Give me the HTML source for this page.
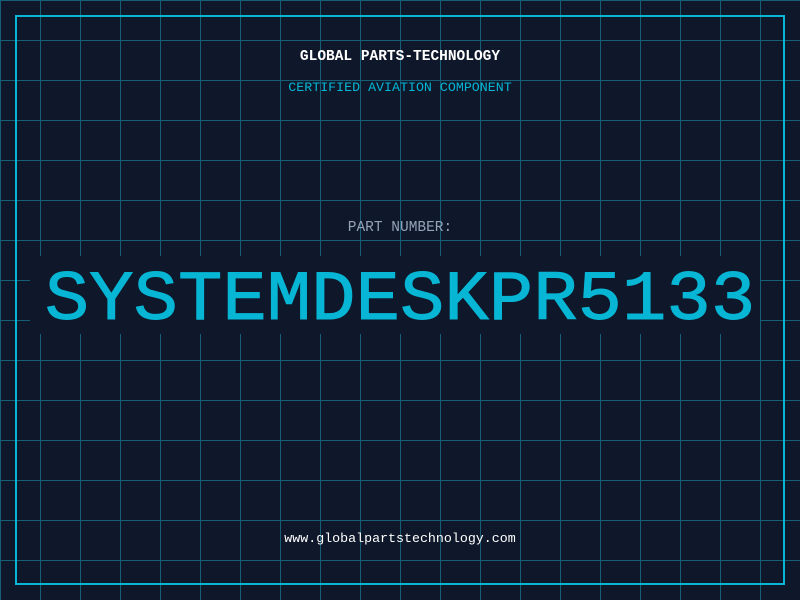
<!DOCTYPE html>
<html><head><meta charset="utf-8"><style>
html,body{margin:0;padding:0;}
body{width:800px;height:600px;background:#0f172a;position:relative;overflow:hidden;font-family:"Liberation Mono",monospace;
background-image:linear-gradient(to right,#155e75 1px,transparent 1px),linear-gradient(to bottom,#155e75 1px,transparent 1px);
background-size:40px 40px;background-position:0 0;}
.border{position:absolute;left:15px;top:15px;width:766px;height:566px;border:2px solid #06b6d4;}
.t{position:absolute;left:0;width:800px;text-align:center;white-space:pre;}
.box{position:absolute;left:30px;top:256px;width:730px;height:78px;background:#0f172a;}
.big{position:absolute;left:0;width:800px;top:258px;font-size:74px;font-weight:normal;color:#06b6d4;-webkit-text-stroke:1px #06b6d4;transform:scaleY(0.95);transform-origin:center;line-height:86px;text-align:center;white-space:pre;}
</style></head><body>
<div class="border"></div>
<div class="t" style="top:49px;font-size:14.5px;font-weight:bold;color:#fff;">GLOBAL PARTS-TECHNOLOGY</div>
<div class="t" style="top:80px;font-size:13.3px;color:#06b6d4;">CERTIFIED AVIATION COMPONENT</div>
<div class="t" style="top:220px;font-size:14.5px;color:#94a3b8;">PART NUMBER:</div>
<div class="box"></div>
<div class="big">SYSTEMDESKPR5133</div>
<div class="t" style="top:531px;font-size:13.3px;color:#fff;">www.globalpartstechnology.com</div>
</body></html>
